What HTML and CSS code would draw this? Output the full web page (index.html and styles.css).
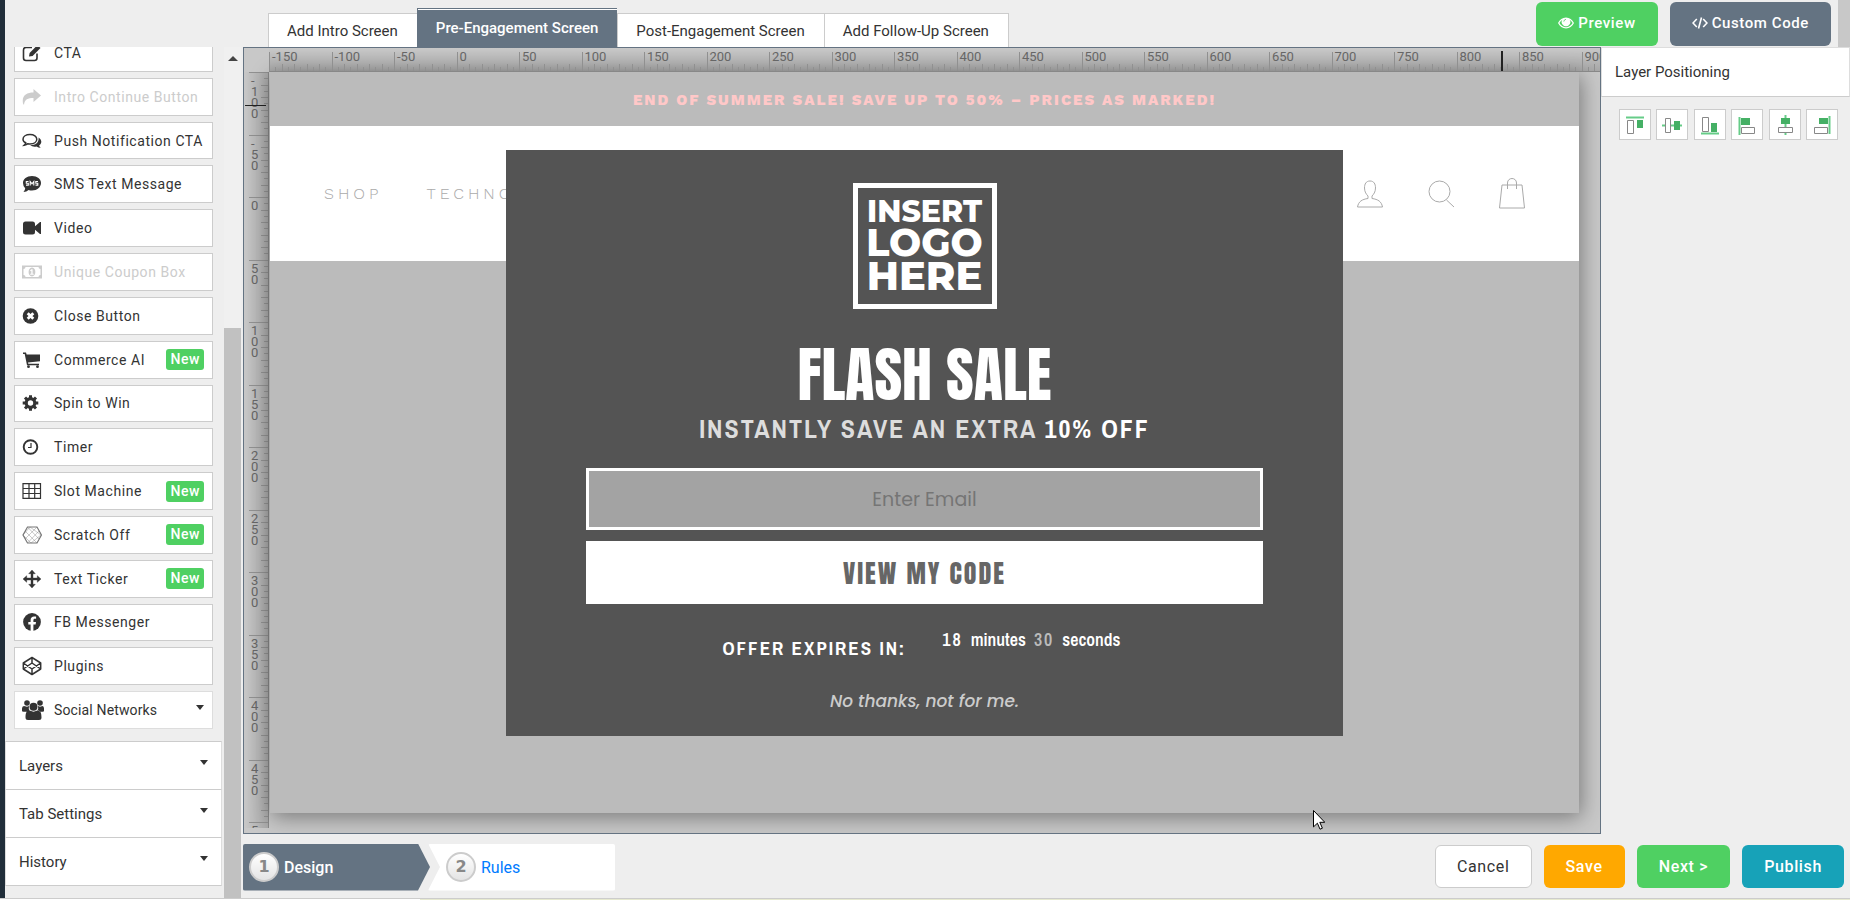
FILE: index.html
```html
<!DOCTYPE html>
<html lang="en">

<head>
    <meta charset="utf-8">
    <meta name="viewport" content="width=device-width, initial-scale=1.0">
    <title>Campaign Designer</title>
    <link rel="stylesheet" href="styles.css">
</head>

<body>
    <div class="app">
        <div class="rail"></div>

        <aside class="sidebar">
            <div class="sidebar-content">
                <div class="elements">
                    <button class="element"><svg class="icon" viewBox="0 0 20 20"><path d="M15 10.500v4.500q0 2.500-2.500 2.500H4q-2.500 0-2.500-2.500V7Q1.500 4.500 4 4.500h6" fill="none" stroke="currentColor" stroke-width="1.600"/><path d="M7 13.500l.6-3.600L15.500 2l3 3-7.900 7.900z"/></svg>CTA</button>
                    <button class="element disabled" disabled><svg class="icon" viewBox="0 0 20 20"><path d="M1 16.500C-.5 8.500 4.500 5.500 11.500 5.500V2L19 8.500 11.500 15v-4C6 11 2.500 12 2 18z"/></svg>Intro Continue Button</button>
                    <button class="element"><svg class="icon" viewBox="0 0 20 20"><path d="M8 3.500c4 0 6.800 2 6.800 4.700S12 12.900 8 12.900q-1.200 0-2-.2-1.500 1.200-3.700 1.500 1.200-1 1.400-2.400Q1 10.500 1 8.200C1 5.500 4 3.500 8 3.500z" fill="none" stroke="currentColor" stroke-width="1.500"/><path d="M16.500 6.500c4 2.500 3.300 6.500.6 7.900q.3 1.500 1.700 2.400-2.600 0-4.300-1.400-3.500.8-6.500-1.100c6 .2 9.300-3.300 8.500-7.800z"/></svg>Push Notification CTA</button>
                    <button class="element"><svg class="icon" viewBox="0 0 20 20"><path d="M10 2c5.200 0 9 3 9 7s-3.800 7.500-9 7.500q-1.800 0-3.400-.6Q4.500 18 1.500 18q1.500-1.500 1.700-3.700Q1 12.200 1 9c0-4 3.800-7 9-7z"/><path d="M6.500 7.500H4.300v1.700h2v1.900H4M8.200 11.500v-4l1.800 2.300 1.800-2.300v4M16 7.500h-2.200v1.700h2v1.900h-2.300" fill="none" stroke="#fff" stroke-width="1.100"/></svg>SMS Text Message</button>
                    <button class="element"><svg class="icon" viewBox="0 0 20 20"><path d="M3.500 3.500h7q2.500 0 2.500 2.500v2.300l5-4.300h1v12h-1l-5-4.300V14q0 2.500-2.500 2.500h-7Q1 16.500 1 14V6q0-2.500 2.500-2.500z"/></svg>Video</button>
                    <button class="element disabled" disabled><svg class="icon" viewBox="0 0 20 20"><path d="M0 3.500h20v13H0zM3.500 5Q3.500 7 1.500 7v6q2 0 2 2h13q0-2 2-2V7q-2 0-2-2z" fill-rule="evenodd"/><path d="M10 5.500c4.500 0 4.500 9 0 9s-4.500-9 0-9zm-.6 1.800L8 8.400l.6.800.7-.4v2.900H8.200v1h3.500v-1h-1.100V7.300z" fill-rule="evenodd"/></svg>Unique Coupon Box</button>
                    <button class="element"><svg class="icon" viewBox="0 0 20 20"><circle cx="8.500" cy="10" r="7.800"/><path d="M5.700 7.200l5.600 5.600M11.300 7.200l-5.600 5.600" stroke="#fff" stroke-width="2.800"/></svg>Close Button</button>
                    <button class="element"><svg class="icon" viewBox="0 0 20 20"><path d="M1 2.500h3l.6 2H18v6.700L6 12.600l.3 1.200H17v1.400H5L2.700 4H1z"/><circle cx="6.500" cy="16.700" r="1.400"/><circle cx="15.500" cy="16.700" r="1.400"/></svg>Commerce AI<span class="badge">New</span></button>
                    <button class="element"><svg class="icon" viewBox="0 0 20 20"><circle cx="8.500" cy="10" r="4.300" fill="none" stroke="currentColor" stroke-width="3.200"/><path d="M8.500 2.200v3M8.500 14.800v3M.7 10h3M13.300 10h3M3 4.500l2.100 2.100M11.900 13.400l2.100 2.100M14 4.500l-2.100 2.100M5.100 13.400L3 15.500" stroke="currentColor" stroke-width="3"/></svg>Spin to Win</button>
                    <button class="element"><svg class="icon" viewBox="0 0 20 20"><circle cx="8.500" cy="10" r="6.800" fill="none" stroke="currentColor" stroke-width="1.900"/><path d="M9 6v4.500H6" fill="none" stroke="currentColor" stroke-width="1.200"/></svg>Timer</button>
                    <button class="element"><svg class="icon" viewBox="0 0 20 20"><path d="M1 2.700h17.500v14.600H1zM1 7.500h17.500M1 12.500h17.500M7 2.700v14.600M12.700 2.700v14.600" fill="none" stroke="currentColor" stroke-width="1.200"/></svg>Slot Machine<span class="badge">New</span></button>
                    <button class="element"><svg class="icon thin" viewBox="0 0 20 20"><path d="M5.500 2h9.500l4.500 8-4.500 8H5.500L1 10z" stroke-width="1.200"/><path d="M3 6l12 12M5.500 2L17 14M17 6L5.500 18M15 2L3 14M1 10l7-8 11 8M1 10l8 8 10-8" stroke-width=".4"/></svg>Scratch Off<span class="badge">New</span></button>
                    <button class="element"><svg class="icon" viewBox="0 0 20 20"><path d="M10 1l3.300 3.700H11V9h4.300V6.700L19 10l-3.700 3.300V11H11v4.300h2.300L10 19l-3.300-3.700H9V11H4.700v2.300L1 10l3.700-3.300V9H9V4.700H6.700z" stroke="currentColor" stroke-width=".4"/></svg>Text Ticker<span class="badge">New</span></button>
                    <button class="element"><svg class="icon" viewBox="0 0 20 20"><circle cx="10" cy="10" r="8.900"/><path d="M8.600 19v-6.400H6.300V10h2.300V8c0-2.400 1.400-3.600 3.500-3.600l2 .2v2.200h-1.200c-1.100 0-1.500.7-1.500 1.400V10H14l-.4 2.600h-2.200V19z" fill="#fff"/></svg>FB Messenger</button>
                    <button class="element"><svg class="icon" viewBox="0 0 20 20"><path d="M10 1.500L18.700 7v6L10 18.500 1.300 13V7zM10 1.500V7M10 13v5.500M1.300 7L10 13l8.700-6M1.300 13L10 7l8.700 6" fill="none" stroke="currentColor" stroke-width="1.500" stroke-linejoin="round"/></svg>Plugins</button>
                    <button class="element social"><svg class="icon" viewBox="0 0 22 20"><circle cx="5" cy="3" r="2.800"/><circle cx="18" cy="3" r="2.800"/><circle cx="11.500" cy="6.700" r="4"/><path d="M0 11V8.500Q0 6 2 6l3 .8L7 6q-.8 3 .8 4.500-2 .2-3 1.300H1.500Q0 11.800 0 11zM22 11V8.500Q22 6 20.500 6L18 6.800 16 6q.8 3-.8 4.500 2 .2 3 1.300h2.500Q22 11.800 22 11zM3.500 17.500c0-4.500 1-7 4-7l4 1.200 4-1.200c3 0 4 2.500 4 7q0 2.500-2.500 2.500H6q-2.500 0-2.500-2.500z"/></svg>Social Networks<span class="caret"></span></button>
                </div>
                <button class="section">Layers<span class="caret"></span></button>
                <button class="section">Tab Settings<span class="caret"></span></button>
                <button class="section">History<span class="caret"></span></button>
            </div>
            <div class="scrollbar">
                <span class="scroll-up"></span>
                <div class="thumb"></div>
            </div>
        </aside>

        <main class="main">
            <header class="topbar">
                <nav class="tabs">
                    <button class="tab">Add Intro Screen</button>
                    <button class="tab active">Pre-Engagement Screen</button>
                    <button class="tab">Post-Engagement Screen</button>
                    <button class="tab">Add Follow-Up Screen</button>
                </nav>
                <div class="top-actions">
                    <button class="btn green"><svg class="btn-icon" viewBox="0 0 16 14"><path d="M8 1.500c3.500 0 6.300 2.300 8 5.500-1.700 3.200-4.500 5.500-8 5.500S1.700 10.200 0 7c1.700-3.200 4.500-5.500 8-5.500zM4.300 3.700Q2.500 5 1.400 7c1.500 2.600 3.900 4.300 6.600 4.300s5.100-1.700 6.600-4.300q-1.100-2-2.900-3.300a4.300 4.300 0 1 1-7.400 0z" fill-rule="evenodd"/><path d="M8 3.300q-2 .2-2.200 2.300" fill="none" stroke="#4fd062" stroke-width=".8"/></svg>Preview</button>
                    <button class="btn slate"><svg class="btn-icon" viewBox="0 0 16 14"><path d="M4.800 3L1 7l3.800 4M11.200 3L15 7l-3.800 4M9.500 1.500l-3 11" fill="none" stroke="currentColor" stroke-width="1.600"/></svg>Custom Code</button>
                </div>
                <div class="top-edge"></div>
            </header>

            <div class="work">
                <div class="canvas">
                    <div class="corner"></div>
                    <div class="ruler horizontal">
                        <svg class="ticks"></svg>
                        <span class="marker"></span>
                    </div>
                    <div class="ruler vertical">
                        <svg class="ticks"></svg>
                        <span class="marker"></span>
                    </div>
                    <div class="stage">
                        <div class="promo">END OF SUMMER SALE! SAVE UP TO 50% – PRICES AS MARKED!</div>
                        <div class="site-header">
                            <a href="#" class="site-link">SHOP</a>
                            <a href="#" class="site-link">TECHNO</a>
                            <div class="site-icons">
                                <svg class="site-icon" viewBox="0 0 28 34"><path d="M14 4c4 0 5.500 3 5.500 7s-2 6.500-3.500 8v2.500c6 .8 9.500 3 10.500 8.500h-25C2.500 24.500 6 22.300 12 21.500V19c-1.500-1.500-3.500-4-3.500-8S10 4 14 4z"/></svg>
                                <svg class="site-icon" viewBox="0 0 28 34"><circle cx="12.500" cy="14.500" r="10.500"/><path d="M19.500 23l7.500 7"/></svg>
                                <svg class="site-icon" viewBox="0 0 28 34"><path d="M4 8h20l2.500 23h-25zM9.500 12V6c0-6 9-6 9 0v6"/></svg>
                            </div>
                        </div>

                        <div class="popup">
                            <div class="logo">
                                <span class="logo-small">INSERT</span>
                                <span class="logo-big">LOGO</span>
                                <span class="logo-mid">HERE</span>
                            </div>
                            <h1 class="headline">FLASH SALE</h1>
                            <p class="offer">INSTANTLY SAVE AN EXTRA <b>10% OFF</b></p>
                            <input class="email" type="email" placeholder="Enter Email" aria-label="Enter Email">
                            <button class="code-btn">VIEW MY CODE</button>
                            <div class="expires">
                                <span class="expires-label">OFFER EXPIRES IN:</span>
                                <span class="countdown"><span class="count">18</span><span>minutes</span><span class="count faded">30</span><span>seconds</span></span>
                            </div>
                            <a href="#" class="decline">No thanks, not for me.</a>
                        </div>
                    </div>
                    <svg class="cursor" viewBox="0 0 12 20"><path d="M.5.500v16.400l3.900-3.700 2.600 6 2.400-1-2.600-5.900h5z" fill="#fff" stroke="#000"/></svg>
                </div>

                <aside class="panel">
                    <h2 class="panel-title">Layer Positioning</h2>
                    <div class="align">
                        <button class="align-btn" aria-label="Align top"><svg viewBox="0 0 20 20"><path class="line" d="M1 2.500h18"/><path class="solid" d="M12 5h6v8h-6z"/><path class="box" d="M2.500 5.500h6v13h-6z"/></svg></button>
                        <button class="align-btn" aria-label="Align middle"><svg viewBox="0 0 20 20"><path class="line" d="M0 10.500h20"/><path class="solid" d="M12 6h6v9h-6z"/><path class="box" d="M3.500 3.500h5v14h-5z"/></svg></button>
                        <button class="align-btn" aria-label="Align bottom"><svg viewBox="0 0 20 20"><path class="line" d="M1 18.500h18"/><path class="solid" d="M11 8h6v9h-6z"/><path class="box" d="M2.500 2.500h6v14h-6z"/></svg></button>
                        <button class="align-btn" aria-label="Align left"><svg viewBox="0 0 20 20"><path class="line" d="M2.500 2v18"/><path class="solid" d="M4 3h9v7H4z"/><path class="box" d="M4.500 12.500h13v6h-13z"/></svg></button>
                        <button class="align-btn" aria-label="Align center"><svg viewBox="0 0 20 20"><path class="line" d="M10.500 0v20"/><path class="solid" d="M6 3h9v6H6z"/><path class="box" d="M3.500 12.500h14v5h-14z"/></svg></button>
                        <button class="align-btn" aria-label="Align right"><svg viewBox="0 0 20 20"><path class="line" d="M17.500 1v18"/><path class="solid" d="M7 3h9v6H7z"/><path class="box" d="M2.500 12.500h13v6h-13z"/></svg></button>
                    </div>
                </aside>
            </div>

            <footer class="bottombar">
                <nav class="steps">
                    <a href="#" class="step current"><span class="number">1</span>Design</a>
                    <a href="#" class="step"><span class="number">2</span>Rules</a>
                </nav>
                <div class="actions">
                    <button class="btn white">Cancel</button>
                    <button class="btn orange">Save</button>
                    <button class="btn green">Next &gt;</button>
                    <button class="btn teal">Publish</button>
                </div>
            </footer>
        </main>
    </div>
    <div class="page-edge"></div>

    <script>
        const zoom = 1.25;

        // Draws the ticks every 5 units and a label every 50
        function drawRuler(selector, from, to, vertical) {
            const ruler = document.querySelector(selector);
            const svg = ruler.querySelector(".ticks");
            const size = vertical ? 24 : 23;
            let path = "";

            for (let n = from; n < to; n += 5) {
                const pos = Math.round((n - from) * zoom) + 0.5;
                const length = n % 50 == 0 ? 19 : n % 10 == 0 ? 7 : 4;
                path += vertical ? `M${size - length} ${pos}H${size}` : `M${pos} ${size - length}V${size}`;
                if (n % 50 == 0) {
                    const label = document.createElement("span");
                    label.className = "label";
                    label.textContent = n;
                    label.style.flexBasis = `${50 * zoom}px`;
                    ruler.appendChild(label);
                }
            }
            svg.innerHTML = `<path d="${path}"/>`;
        }

        drawRuler(".horizontal", -150, 920, false);
        drawRuler(".vertical", -100, 510, true);
    </script>
</body>

</html>
```
FILE: styles.css
```css
* {
    box-sizing: border-box;
}

body {
    margin: 0;
    height: 100vh;
    display: flex;
    flex-direction: column;
    overflow: hidden;
    background-color: #eee;
    color: #333;
    font-family: Roboto, sans-serif;
    font-size: 15px;
}

button {
    font: inherit;
    color: inherit;
    cursor: pointer;
}

a {
    text-decoration: none;
}

.app {
    flex: 1;
    min-height: 0;
    display: flex;
}

.rail {
    width: 5px;
    background-color: #212e3a;
}

.page-edge {
    height: 2px;
    background: linear-gradient(to right, #fff 420px, #e6e9cf 420px);
    border-top: 1px solid #ccc;
}

/* Sidebar */

.sidebar {
    display: flex;
    width: 236px;
    margin-top: 47px;
    overflow: hidden;
}

.sidebar-content {
    flex: 1;
    display: flex;
    flex-direction: column;
    padding: 0 2px 12px 0;
}

/* the list is scrolled a little past its first element */
.elements {
    flex: 1;
    display: flex;
    flex-direction: column;
    gap: 6px;
    margin-top: -13px;
    padding: 0 9px 12px 9px;
}

.element {
    flex: 1;
    display: flex;
    align-items: center;
    padding: 0 8px 0 7px;
    background-color: #fff;
    border: 1px solid #ccc;
    font-size: 14px;
    letter-spacing: 0.04em;
    text-align: left;
    white-space: nowrap;
}

.element.disabled {
    color: #ccc;
}

.element.social {
    border-color: #ddd;
    letter-spacing: 0.01em;
}

.icon {
    width: 20px;
    height: 20px;
    margin-right: 12px;
    fill: currentColor;
}

.social .icon {
    width: 22px;
    margin-right: 10px;
}

.icon.thin {
    fill: none;
    stroke: #777;
}

.badge {
    margin-left: auto;
    padding: 0 4px;
    border-radius: 3px;
    background-color: #4fd062;
    color: #fff;
    font-weight: 500;
    line-height: 21px;
}

.caret {
    margin-left: auto;
    margin-bottom: 6px;
    border: 4px solid transparent;
    border-top: 5px solid #333;
    border-bottom: 0;
}

.section {
    display: flex;
    align-items: center;
    height: 48px;
    padding: 0 13px;
    background-color: #fff;
    border: 1px solid #ddd;
    border-top-color: #ccc;
    border-bottom: 0;
}

.section:last-child {
    height: 49px;
    border-bottom: 1px solid #ccc;
}

.scrollbar {
    display: flex;
    flex-direction: column;
    width: 17px;
    background-color: #f0f0f0;
}

.scroll-up {
    align-self: center;
    margin-top: 9px;
    border: 5px solid transparent;
    border-top: 0;
    border-bottom: 5px solid #444;
}

.thumb {
    height: 67%;
    margin-top: auto;
    background-color: #c1c1c1;
}

/* Top bar */

.main {
    flex: 1;
    min-width: 0;
    display: flex;
    flex-direction: column;
    padding-left: 2px;
}

.topbar {
    display: flex;
    align-items: flex-end;
    height: 47px;
    padding-left: 25px;
}

.tabs {
    display: flex;
    align-items: flex-end;
}

.tab {
    height: 34px;
    padding: 0 19px 0 18px;
    background-color: #fff;
    border: 1px solid #ccc;
    border-width: 1px 0 0 1px;
}

.tab:last-child {
    border-right-width: 1px;
}

.tab.active {
    height: 39px;
    background-color: #647382;
    border-color: #647382;
    box-shadow: inset 0 1px 0 #fff;
    color: #fff;
    font-weight: 500;
}

.top-actions {
    display: flex;
    gap: 12px;
    height: 44px;
    margin-left: auto;
    margin-bottom: 1px;
}

.top-edge {
    width: 12px;
    height: 47px;
    margin-left: 7px;
    background-color: #c8c8c8;
}

.btn {
    display: flex;
    align-items: center;
    padding: 0 21px;
    border: 1px solid transparent;
    border-radius: 6px;
    color: #fff;
    font-size: 16px;
    font-weight: 500;
    letter-spacing: 0.04em;
}

.top-actions .btn {
    padding-bottom: 2px;
    font-size: 15px;
}

.btn-icon {
    width: 16px;
    height: 14px;
    margin-right: 4px;
    fill: currentColor;
}

.green {
    background-color: #4fd062;
}

.slate {
    background-color: #647382;
}

.orange {
    background-color: #ffa800;
}

.teal {
    background-color: #17a2b8;
}

.white {
    background-color: #fff;
    border-color: #ccc;
    color: #333;
    font-weight: 400;
}

/* Canvas with rulers */

.work {
    flex: 1;
    min-height: 0;
    display: flex;
}

.canvas {
    position: relative;
    flex: 1;
    min-width: 0;
    display: grid;
    grid-template-columns: 25px 1fr;
    grid-template-rows: 24px 1fr;
    border: 1px solid #647382;
    background-color: #c8c8c8;
    overflow: hidden;
}

.ruler {
    position: relative;
    display: flex;
    overflow: hidden;
    color: #666;
    font-size: 13px;
}

.horizontal {
    z-index: 1;
    border-bottom: 1px solid #888;
    background: linear-gradient(rgba(0, 0, 0, 0), rgba(0, 0, 0, 0.16));
}

.vertical {
    flex-direction: column;
    margin-bottom: 5px;
    border-right: 1px solid #888;
    background: linear-gradient(to right, rgba(0, 0, 0, 0), rgba(0, 0, 0, 0.16));
}

.ticks {
    position: absolute;
    left: 0;
    top: 0;
    width: 100%;
    height: 100%;
    stroke: #909090;
}

.label {
    flex-shrink: 0;
    padding-left: 3px;
    line-height: 18px;
}

.vertical .label {
    width: 16px;
    padding: 3px 0 0 7px;
    line-height: 11px;
    word-break: break-all;
    line-break: anywhere;
}

.marker {
    position: absolute;
    background-color: #222;
}

.horizontal .marker {
    left: 1232px;
    top: 3px;
    width: 2px;
    height: 21px;
}

.vertical .marker {
    left: 1px;
    top: 33px;
    width: 21px;
    height: 1px;
}

.stage {
    position: relative;
    display: flex;
    flex-direction: column;
    margin: 0 21px 20px 1px;
    background-color: #bbb;
    box-shadow: 2px 4px 20px rgba(0, 0, 0, 0.4);
}

.promo {
    padding-top: 2px;
    color: #ffc8c8;
    font-family: "Work Sans", "DejaVu Sans", sans-serif;
    font-size: 15px;
    font-weight: 800;
    letter-spacing: 2px;
    line-height: 52px;
    text-align: center;
}

.site-header {
    display: flex;
    align-items: center;
    gap: 44px;
    height: 135px;
    padding: 0 53px 0 54px;
    background-color: #fff;
}

.site-link {
    color: #aaa;
    font-family: "Work Sans", Inter, sans-serif;
    font-size: 16px;
    font-weight: 300;
    letter-spacing: 4px;
}

.site-icons {
    display: flex;
    gap: 43px;
    margin-left: auto;
}

.site-icon {
    width: 28px;
    height: 34px;
    fill: none;
    stroke: #aaa;
}

.cursor {
    position: absolute;
    left: 1069px;
    top: 762px;
    width: 12px;
    height: 20px;
}

/* Popup */

.popup {
    position: absolute;
    left: 18%;
    right: 18%;
    top: 78px;
    display: flex;
    flex-direction: column;
    padding: 33px 80px 20px;
    background-color: #545454;
    color: #fff;
    font-family: "Archivo Narrow", "Roboto Condensed", sans-serif;
    text-align: center;
}

.logo {
    align-self: center;
    display: flex;
    flex-direction: column;
    align-items: center;
    width: 144px;
    height: 126px;
    padding-top: 9px;
    border: 5px solid #fff;
    font-family: Montserrat, Inter, sans-serif;
    font-weight: 800;
}

.logo-small {
    font-size: 30px;
    line-height: 30px;
}

.logo-big {
    font-size: 38px;
    line-height: 32px;
}

.logo-mid {
    font-size: 40px;
    line-height: 33px;
}

.headline {
    margin: 28px 0 0;
    font-family: Anton, "Roboto Condensed", sans-serif;
    font-size: 60px;
    font-weight: 400;
    line-height: 76px;
}

.offer {
    margin: 0;
    color: #ddd;
    font-size: 26px;
    font-weight: bold;
    letter-spacing: 2px;
    line-height: 32px;
}

.offer b {
    color: #fff;
}

.email {
    height: 62px;
    margin-top: 23px;
    border: 3px solid #fff;
    border-radius: 0;
    background-color: #a3a3a3;
    font-family: Poppins, "Open Sans", sans-serif;
    font-size: 19px;
    text-align: center;
}

.email::placeholder {
    color: #757575;
}

.code-btn {
    height: 63px;
    margin-top: 11px;
    border: 0;
    background-color: #fff;
    color: #666;
    font-family: Anton, "Roboto Condensed", sans-serif;
    font-size: 26px;
    letter-spacing: 2px;
}

.expires {
    display: flex;
    justify-content: center;
    gap: 36px;
    margin-top: 26px;
    padding-right: 6px;
    font-weight: bold;
    font-size: 18px;
}

.expires-label {
    padding-top: 8px;
    font-size: 19px;
    letter-spacing: 2px;
    line-height: 20px;
}

.countdown {
    display: flex;
    gap: 8px;
    font-weight: 600;
    line-height: 20px;
}

.count {
    letter-spacing: 2px;
}

.faded {
    color: #bbb;
}

.decline {
    margin-top: 28px;
    color: #ccc;
    font-family: Poppins, "Open Sans", sans-serif;
    font-size: 17px;
    font-style: italic;
    font-weight: 500;
    line-height: 30px;
}

/* Right panel */

.panel {
    width: 249px;
}

.panel-title {
    margin: 0;
    padding-left: 13px;
    border: 1px solid #ddd;
    border-bottom-color: #ccc;
    background-color: #fff;
    font-size: 15px;
    font-weight: 400;
    line-height: 48px;
}

.align {
    display: flex;
    justify-content: space-between;
    padding: 12px 12px 0 18px;
}

.align-btn {
    display: flex;
    align-items: center;
    justify-content: center;
    width: 32px;
    height: 31px;
    padding: 0;
    border: 1px solid #ccc;
    background-color: #fff;
}

.align-btn svg {
    width: 20px;
    height: 20px;
}

.line {
    stroke: #6c8;
    stroke-width: 2;
}

.solid {
    fill: #45b065;
}

.box {
    fill: #fff;
    stroke: #888;
}

/* Bottom bar */

.bottombar {
    display: flex;
    align-items: center;
    justify-content: space-between;
    height: 64px;
    padding-right: 6px;
}

.steps {
    display: flex;
    padding-top: 2px;
}

.step {
    display: flex;
    align-items: center;
    width: 187px;
    height: 47px;
    padding-left: 6px;
    border-radius: 2px;
    background-color: #fff;
    color: #007bff;
    font-size: 16px;
    clip-path: polygon(0 0, 100% 0, 100% 100%, 0 100%, 12px 50%);
}

.step + .step {
    margin-left: -2px;
    padding-left: 18px;
}

.step.current {
    background-color: #647382;
    color: #fff;
    font-weight: 500;
    clip-path: polygon(0 0, 175px 0, 100% 50%, 175px 100%, 0 100%);
}

.number {
    width: 30px;
    height: 30px;
    margin-right: 5px;
    border: 2px solid #ccc;
    border-radius: 50%;
    background: linear-gradient(#fff, #e4e4e4);
    color: #888;
    font-family: "DejaVu Sans", sans-serif;
    font-size: 16px;
    font-weight: bold;
    line-height: 26px;
    text-align: center;
}

.actions {
    display: flex;
    gap: 12px;
}

.actions .btn {
    height: 43px;
}
```
